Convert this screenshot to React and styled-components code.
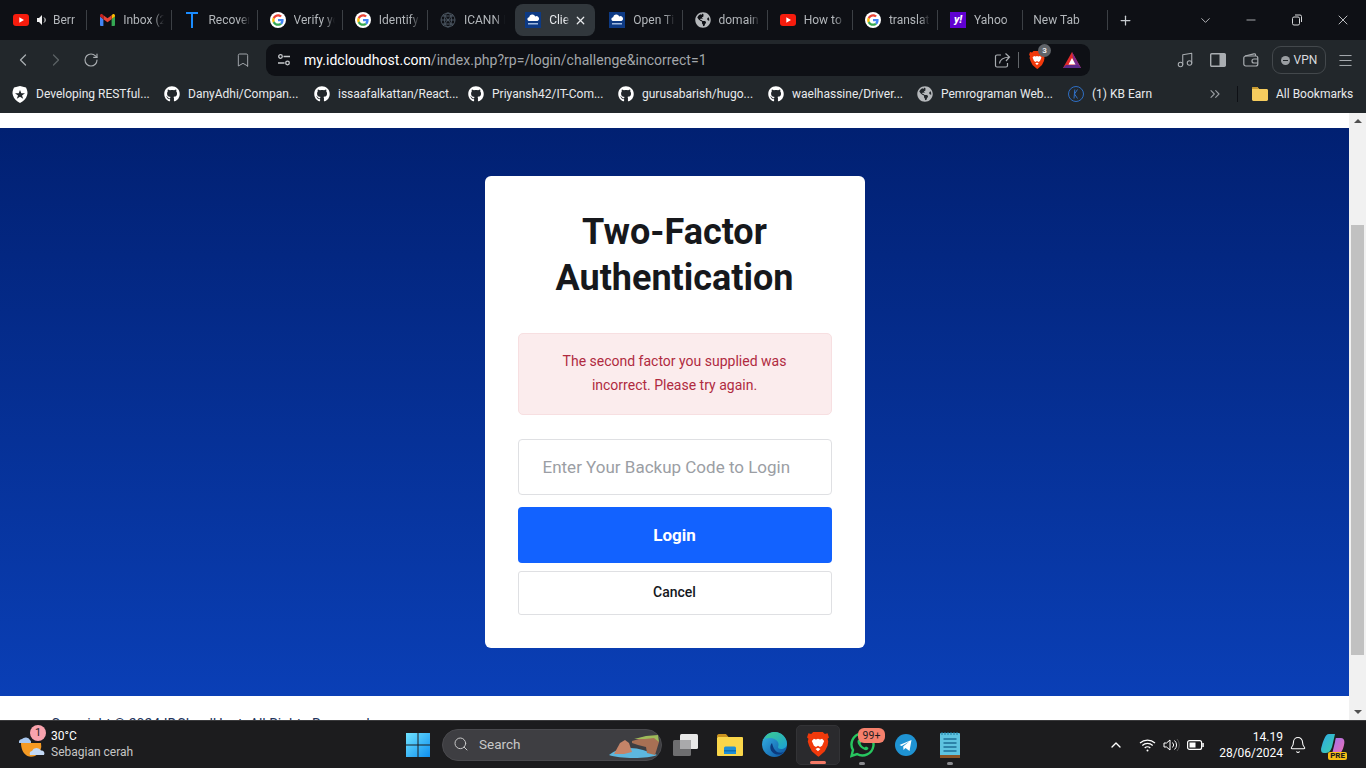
import React from 'react';
import styled, { createGlobalStyle } from 'styled-components';
import { ChevronLeft, ChevronRight, ChevronDown, ChevronUp, ChevronsRight, RotateCw, Bookmark, Music, Menu, Search, Bell, Plus, Minus, X } from 'lucide-react';
import { FaGithub, FaGlobeAmericas } from 'react-icons/fa';

const Global = createGlobalStyle`
  html, body { margin: 0; padding: 0; height: 100%; overflow: hidden; background: #fff; }
  * { box-sizing: border-box; }
  body { font-family: Roboto, "Liberation Sans", sans-serif; }
`;

const Screen = styled.div`
  width: 1366px; height: 768px; display: flex; flex-direction: column; overflow: hidden;
`;

/* ---------- browser chrome ---------- */
const TabStrip = styled.div`
  height: 40px; background: #0e1015; display: flex; align-items: center; padding: 0 0 0 2px; flex: none;
`;
const Tab = styled.div`
  flex: 0 0 85.2px; min-width: 0; height: 32px; position: relative; display: flex; align-items: center;
  padding-left: ${p => (p.$plain ? 10 : 12)}px; border-radius: 8px;
  &:first-child { padding-left: 11px; }
  &::after {
    content: ''; position: absolute; right: 0; top: 6px; height: 20px; width: 1px;
    background: ${p => (p.$noSep ? 'transparent' : '#3c4045')};
  }
`;
const ActiveTab = styled(Tab)`
  background: #31373c; flex: 0 0 80.2px; margin: 0 2px; padding-left: 10px;
`;
const TabIcon = styled.span`
  width: 16px; height: 16px; flex: none; display: flex; align-items: center; justify-content: center; margin-right: 8px;
`;
const TabTitle = styled.span`
  font-size: 12px; color: ${p => (p.$active ? '#e8eaed' : '#b3b7bb')}; white-space: nowrap; overflow: hidden; flex: 1; min-width: 0;
  margin-right: ${p => p.$gap || 8}px;
  -webkit-mask-image: linear-gradient(90deg, #000 75%, transparent 100%);
  mask-image: linear-gradient(90deg, #000 75%, transparent 100%);
`;
const Speaker = styled.span`
  margin: 0 5px 0 0; display: flex; flex: none;
`;
const CloseTab = styled.span`
  color: #e8eaed; display: flex; margin-right: 8px; flex: none;
`;
const NewTabBtn = styled.span`
  color: #c8ccd0; display: flex; margin-left: 10px;
`;
const WinControls = styled.div`
  margin-left: auto; display: flex; align-items: center; color: #d6d8da;
`;
const WinBtn = styled.span`
  width: 46px; display: flex; justify-content: center;
`;
const YahooMark = styled.span`
  width: 16px; height: 16px; background: #5f01d1; color: #fff; font: italic 800 11px/16px Roboto, sans-serif; text-align: center;
`;

const Toolbar = styled.div`
  height: 40px; background: #22272b; display: flex; align-items: center; flex: none;
`;
const NavBtn = styled.span`
  width: ${p => p.$w}px; display: flex; justify-content: ${p => p.$end ? 'flex-end' : 'center'}; padding-right: ${p => p.$end ? 4 : 0}px; color: ${p => p.$dim ? '#5c6165' : '#a9adb1'};
`;
const Omnibox = styled.div`
  width: 824px; height: 32px; background: #0e1015; border-radius: 9px; display: flex; align-items: center; margin-left: 11px; padding: 0 9px 0 10px;
`;
const UrlText = styled.div`
  font-size: 14px; color: #a2a6aa; margin-left: 12px; flex: 1; letter-spacing: 0.03px; white-space: nowrap;
  b { font-weight: 400; color: #fff; }
`;
const OmniDivider = styled.span`
  width: 1px; height: 16px; background: #62666a; margin: 0 10px 0 7px;
`;
const ShieldWrap = styled.span`
  position: relative; display: flex; margin-right: 18px;
`;
const ShieldBadge = styled.span`
  position: absolute; left: 9px; top: -7px; width: 13px; height: 13px; border-radius: 50%; background: #5f6368; color: #e8eaed; font-size: 8px; font-weight: 700; line-height: 13px; text-align: center;
`;
const ToolRight = styled.div`
  margin-left: 78px; display: flex; align-items: center; color: #a9adb1;
`;
const ToolBtn = styled.span`
  width: ${p => p.$w || 33}px; display: flex; justify-content: center;
`;
const VpnPill = styled.span`
  width: 54px; height: 28px; border: 1px solid #43484c; border-radius: 9px; display: flex; align-items: center; justify-content: center; gap: 4px;
  font-size: 12px; font-weight: 400; color: #d8dbde; margin-left: 5px; margin-right: 3px;
`;
const VpnDot = styled.span`
  width: 9px; height: 9px; border-radius: 50%; background: #9a9ea2; position: relative;
  &::after { content: ''; position: absolute; left: 2px; right: 2px; top: 4px; height: 1px; background: #22272b; }
`;

const BookmarkBar = styled.div`
  height: 33px; background: #22272b; display: flex; align-items: center; padding: 0 0 5px 12px; flex: none;
`;
const BookmarkItem = styled.div`
  flex: 0 0 ${p => p.$w}px; display: flex; align-items: center; gap: 8px; font-size: 12px; color: #e8eaed; white-space: nowrap;
  svg { flex: none; }
`;
const BookmarkEnd = styled.div`
  display: flex; align-items: center; margin-left: 51px; color: #9a9ea2;
`;
const BarRule = styled.span`
  width: 1px; height: 16px; background: #0e1015; margin: 0 14px 0 14px;
`;

/* ---------- page ---------- */
const Viewport = styled.div`
  flex: 1; min-height: 0; display: flex; overflow: hidden;
`;
const Page = styled.main`
  flex: 1; min-width: 0; background: #fff; padding-top: 15px; overflow: hidden;
`;
const Hero = styled.section`
  height: 568px; background: linear-gradient(180deg, #012072 0%, #0a3fb6 100%); display: flex; align-items: center; justify-content: center;
`;
const Card = styled.div`
  width: 380px; background: #fff; border-radius: 6px; padding: 33px 33px 33px;
`;
const Title = styled.h1`
  margin: 0 0 32px; font-size: 36px; line-height: 46px; font-weight: 700; color: #16181c; text-align: center;
`;
const Alert = styled.div`
  height: 82px; background: #fbeced; border: 1px solid #f7dfe1; border-radius: 5px; padding: 15px 40px; font-size: 14px; line-height: 24px; color: #b02a3f; text-align: center; margin-bottom: 24px;
`;
const CodeInput = styled.input`
  display: block; width: 100%; height: 56px; border: 1px solid #dfe0e3; border-radius: 4px; padding: 0 24px; font: 400 17px Roboto, sans-serif; outline: none; margin-bottom: 12px;
  &::placeholder { color: #9b9ea4; opacity: 1; }
`;
const LoginButton = styled.button`
  display: block; width: 100%; height: 56px; border: 0; border-radius: 4px; background: #1262ff; color: #fff; font: 700 17px Roboto, sans-serif; margin-bottom: 8px;
`;
const CancelButton = styled.button`
  display: block; width: 100%; height: 44px; border: 1px solid #dfe0e3; border-radius: 3px; background: #fff; color: #14171c; font: 500 14px Roboto, sans-serif; padding: 0 0 2px;
`;
const Footer = styled.footer`
  padding: 18px 0 0 51px; font-size: 14px; line-height: 20px; color: #24345c; white-space: nowrap;
`;
const Scrollbar = styled.div`
  width: 17px; flex: none; background: #f1f1f1; display: flex; flex-direction: column; align-items: center;
`;
const Arrow = styled.span`
  width: 0; height: 0; flex: none; border-left: 4px solid transparent; border-right: 4px solid transparent;
  ${p => p.$down
    ? 'border-top: 4px solid #505050; margin-top: auto; margin-bottom: 6px;'
    : 'border-bottom: 4px solid #505050; margin-top: 6px;'}
`;
const Thumb = styled.div`
  width: 13px; height: 430px; background: #c1c1c1; margin-top: 102px; flex: none;
`;

/* ---------- taskbar ---------- */
const Taskbar = styled.footer`
  height: 48px; flex: none; background: #1c1c1e; border-top: 1px solid #3a3a3c; display: flex; align-items: center;
`;
const Weather = styled.div`
  flex: 0 0 395px; display: flex; align-items: center; padding-left: 18px; height: 100%;
`;
const WeatherIcon = styled.span`
  position: relative; width: 28px; height: 28px; display: flex; margin-right: 5px;
`;
const WeatherBadge = styled.span`
  position: absolute; left: 12px; top: -6px; width: 16px; height: 16px; border-radius: 50%; background: #f9a3ae; color: #1c1c1e; font-size: 11px; line-height: 16px; text-align: center;
`;
const WeatherText = styled.div`
  font-size: 12px; line-height: 15.5px; color: #c6c6c6;
  strong { display: block; font-weight: 400; color: #fff; }
`;
const TaskSlot = styled.span`
  flex: 0 0 ${p => p.$w || 44}px; height: 40px; display: flex; align-items: center; justify-content: center; position: relative; border-radius: 5px;
  ${p => p.$active ? 'background: #2a2a2d; border: 1px solid #333336;' : ''}
`;
const RunDot = styled.span`
  position: absolute; bottom: 0; left: 50%; transform: translateX(-50%);
  width: ${p => p.$on ? 16 : 6}px; height: 3px; border-radius: 2px; background: ${p => p.$on ? '#f47a66' : '#8b8b8f'};
`;
const SearchPill = styled.div`
  width: 220px; height: 32px; margin: 0 2px; border-radius: 16px; background: #3e3e42; border: 1px solid #4a4a4e; display: flex; align-items: center; padding: 0 0 1px 10px; color: #c8c8c8; font-size: 13.5px; gap: 10px; position: relative;
`;
const Thumbnail = styled.span`
  position: absolute; right: 1px; top: 3px; display: flex;
`;
const CountBadge = styled.span`
  position: absolute; left: 18px; top: 3px; width: 27px; height: 15px; border-radius: 6px; background: #f5806c; color: #1c1c1e; font-size: 10.5px; line-height: 15px; text-align: center;
`;
const Tray = styled.div`
  margin-left: auto; display: flex; align-items: center; padding-right: 21px; color: #fff;
`;
const TraySlot = styled.span`
  flex: 0 0 ${p => p.$w || 24}px; display: flex; justify-content: center;
`;
const Clock = styled.div`
  width: 76px; text-align: right; font-size: 12px; line-height: 16px; color: #fff; margin-right: 3px;
`;
const CopilotWrap = styled.span`
  position: relative; display: flex; margin-left: 11px;
`;
const PreTag = styled.span`
  position: absolute; right: -2px; bottom: -3px; background: #f6bd16; color: #1c1c1e; font-size: 8px; font-weight: 800; line-height: 8px; padding: 0 2px; border-radius: 2px;
`;

/* ---------- drawn icons ---------- */
const YouTube = () => (
  <svg width="16" height="12" viewBox="0 0 16 12"><rect width="16" height="12" rx="3" fill="#f61c0d" /><path d="M6.3 3.3 11 6l-4.700 2.700z" fill="#fff" /></svg>
);
const SpeakerIcon = () => (
  <svg width="11" height="10" viewBox="0 0 11 10"><path d="M0 3h2l3-3v10L2 7H0z" fill="#f1f1f1" /><path d="M7 2.500a3.200 3.200 0 0 1 0 5" stroke="#f1f1f1" fill="none" /></svg>
);
const Gmail = () => (
  <svg width="15" height="12" viewBox="0 0 15 12">
    <path d="M0 2.500v8.200c0 .7.500 1.300 1.200 1.300h2.200V5.200z" fill="#4285f4" />
    <path d="M11.600 5.200V12h2.200c.7 0 1.200-.6 1.200-1.300V2.500z" fill="#34a853" />
    <path d="M11.600 1.200v4L15 2.500V1.600c0-1.300-1.500-2-2.500-1.200z" fill="#fbbc04" />
    <path d="M3.400 5.200v-4L7.500 4.300l4.100-3.100v4L7.500 8.300z" fill="#ea4335" />
    <path d="M0 1.600v.9l3.400 2.700v-4L2.500.4C1.500-.4 0 .3 0 1.600z" fill="#c5221f" />
  </svg>
);
const TLogo = () => (
  <svg width="14" height="16" viewBox="0 0 14 16"><path d="M1 1h12M7 1v15" stroke="#1a8cff" strokeWidth="2" fill="none" /></svg>
);
const Google = () => (
  <svg width="16" height="16" viewBox="0 0 48 48">
    <circle cx="24" cy="24" r="24" fill="#fff" />
    <g transform="translate(6.500 6.500) scale(.73)">
      <path fill="#ea4335" d="M24 9.500c3.500 0 6.700 1.200 9.200 3.600l6.900-6.900C35.900 2.400 30.500 0 24 0 14.600 0 6.500 5.400 2.600 13.200l8 6.200C12.400 13.700 17.700 9.500 24 9.500z" />
      <path fill="#4285f4" d="M47 24.500c0-1.600-.1-3.100-.4-4.500H24v9h13c-.6 3-2.300 5.500-4.800 7.200l7.700 6c4.500-4.200 7.100-10.300 7.100-17.700z" />
      <path fill="#fbbc05" d="M10.500 28.600c-.5-1.400-.8-3-.8-4.600s.3-3.200.8-4.600l-8-6.200C1 16.500 0 20.100 0 24s1 7.500 2.600 10.800z" />
      <path fill="#34a853" d="M24 48c6.500 0 11.900-2.100 15.900-5.800l-7.700-6c-2.100 1.400-4.900 2.300-8.200 2.300-6.300 0-11.600-4.200-13.500-9.900l-8 6.200C6.500 42.600 14.600 48 24 48z" />
    </g>
  </svg>
);
const IcannGlobe = () => (
  <svg width="16" height="16" viewBox="0 0 16 16" fill="none" stroke="#4a5560" strokeWidth="1">
    <circle cx="8" cy="8" r="7" /><ellipse cx="8" cy="8" rx="3.500" ry="7" /><path d="M1 8h14M2.500 4h11M2.500 12h11M3 2l10 12M13 2 3 14" />
  </svg>
);
const CloudHost = () => (
  <svg width="16" height="16" viewBox="0 0 16 16">
    <rect width="16" height="16" fill="#0d3a84" />
    <path d="M3.500 9a2 2 0 0 1 .6-3.800 3.300 3.300 0 0 1 6.200-.8A2.400 2.400 0 0 1 12.500 9z" fill="#fff" />
    <rect x="3" y="11" width="10" height="1.500" fill="#9db8df" />
  </svg>
);
const GlobeFav = () => <FaGlobeAmericas size={16} color="#b5b8bb" />;
const RestoreIcon = () => (
  <svg width="12" height="12" viewBox="0 0 12 12" fill="none" stroke="#d6d8da" strokeWidth="1"><rect x="1.500" y="3" width="7" height="8" rx="1.500" /><path d="M4 1h5a1.500 1.500 0 0 1 1.500 1.500V8" /></svg>
);
const SiteTune = () => (
  <svg width="16" height="16" viewBox="0 0 16 16" fill="none" stroke="#c6c9cc" strokeWidth="1.300">
    <circle cx="4.500" cy="4.500" r="1.800" /><path d="M7.500 4.500H14M2 11h6.500" /><circle cx="11.500" cy="11" r="1.800" />
  </svg>
);
const ShareIcon = () => (
  <svg width="17" height="17" viewBox="0 0 17 17" fill="none" stroke="#a9adb1" strokeWidth="1.200">
    <path d="M7 3H3a1.500 1.500 0 0 0-1.500 1.500v9A1.500 1.500 0 0 0 3 15h9a1.500 1.500 0 0 0 1.500-1.500V11" />
    <path d="M5.500 11.500c.5-4 3-6 10-6.500M11.500 1.500l4 3.500-3.500 4" />
  </svg>
);
const BraveLion = ({ size = 16 }) => (
  <svg width={size} height={size * 1.12} viewBox="0 0 16 18">
    <path d="M4.500 0h7L13 1.500 15 1l1 3-1 1 .5 2-.5 3-2 4-4.500 4-1-.5-4-3.500-2-4L.5 7 1 5 0 4l1-3 2 .5z" fill="#f1390b" />
    <path d="M5 5 3.500 6.500 5 10l1.500 1 1.500-1 1.500 1 1.500-1 1.500-3.500L11 5 9.500 5.500 8 5 6.500 5.500zM6.200 12.500 8 14l1.800-1.500L8 11.500z" fill="#fff" />
  </svg>
);
const Triangle = () => (
  <svg width="18" height="16" viewBox="0 0 18 16">
    <path d="M9 0 18 16H0z" fill="#e22a2a" /><path d="M9 0 18 16H12z" fill="#7b2c8d" /><path d="M18 16H0l3-3h12z" fill="#5b2a8a" /><path d="M9 6 12.500 12.500h-7z" fill="#fff" />
  </svg>
);
const PanelIcon = () => (
  <svg width="16" height="14" viewBox="0 0 16 14"><rect x=".7" y=".7" width="14.600" height="12.600" rx="1" fill="none" stroke="#a9adb1" strokeWidth="1.400" /><rect x="9.500" y="1" width="6" height="12" fill="#a9adb1" /></svg>
);
const WalletIcon = () => (
  <svg width="16" height="14" viewBox="0 0 16 14" fill="none" stroke="#a9adb1" strokeWidth="1.200"><path d="M2 3 11 .8c1-.2 1.500.4 1.500 1.200v1" /><rect x=".8" y="3" width="14" height="10" rx="2" /><path d="M15 6h-4a2 2 0 0 0 0 4h4" /></svg>
);
const ShieldStar = () => (
  <svg width="16" height="17" viewBox="0 0 16 17"><path d="M8 0l6 1.500c1.500 3 2 5.500 1 8-.8 3-3.500 5.500-7 7.500-3.500-2-6.200-4.500-7-7.500-1-2.500-.5-5 1-8z" fill="#fff" /><path d="M8 4l1.300 3.300H13L10 9.400l1.200 3.400L8 10.700l-3.200 2.100L6 9.400 3 7.300h3.700z" fill="#22272b" /></svg>
);
const KBadge = () => (
  <svg width="16" height="16" viewBox="0 0 16 16" fill="none" stroke="#2f6fc4" strokeWidth="1"><circle cx="8" cy="8" r="7.500" /><path d="M9.500 3.500 6.500 8l3 4.500M6.800 3.500 6 12.500" /></svg>
);
const Folder = () => (
  <svg width="16" height="14" viewBox="0 0 16 14"><path d="M0 1.500C0 .7.600 0 1.400 0h4l1.600 2h7.600c.8 0 1.400.6 1.400 1.400v9.200c0 .8-.6 1.400-1.400 1.400H1.400C.6 14 0 13.400 0 12.600z" fill="#f6cc5e" /><path d="M0 1.500C0 .7.600 0 1.400 0h4l1.600 2H0z" fill="#c89a30" /></svg>
);
const WeatherArt = () => (
  <svg width="28" height="28" viewBox="0 0 28 28">
    <path d="M3 12h20a10 11 0 0 1-6 13c-3 1-7 1-9-1-3-2-5-7-5-12z" fill="#f59a23" />
    <path d="M1 12a3.500 3.500 0 0 1 3-4 5 5 0 0 1 8 1 3 3 0 0 1 1 3z" fill="#a9c8ef" />
    <path d="M12 24a3 3 0 0 1 2-4 5 5 0 0 1 9-.5 3 3 0 0 1 3 4.500z" fill="#c3d9f5" />
  </svg>
);
const WinLogo = () => (
  <svg width="24" height="24" viewBox="0 0 24 24">
    <defs><linearGradient id="wl" x1="0" y1="0" x2="1" y2="1"><stop offset="0" stopColor="#6fe3ff" /><stop offset="1" stopColor="#0f8ff0" /></linearGradient></defs>
    <path d="M0 0h11.500v11.500H0zM12.500 0H24v11.500H12.500zM0 12.500h11.500V24H0zM12.500 12.500H24V24H12.500z" fill="url(#wl)" />
  </svg>
);
const Landscape = () => (
  <svg width="52" height="26" viewBox="0 0 52 26">
    <path d="M1 22c8-7 22-9 34-5 6 2 12 4 14 5-8 4-38 4-48 0z" fill="#5db7de" />
    <path d="M6 21l6-11 5-3 4 3 3 9-8 2z" fill="#c58468" />
    <path d="M24 8l14-4 11 0 2 5-4 13-8-2-1-6-8-2-6-2z" fill="#a87054" />
    <path d="M26 6l12-3 12-1 1 7-5-4-9 1z" fill="#9fbb5a" />
  </svg>
);
const TaskView = () => (
  <svg width="26" height="24" viewBox="0 0 26 24">
    <rect x="7" y="1" width="18" height="15" rx="1.500" fill="#e8e8e8" />
    <rect x="0" y="7" width="18" height="16" rx="1.500" fill="#6e6e70" />
    <rect x="7" y="7" width="11" height="9" fill="#a9a9ab" />
  </svg>
);
const Explorer = () => (
  <svg width="26" height="22" viewBox="0 0 26 22">
    <path d="M0 2c0-1 .6-2 2-2h7l2.500 3H0z" fill="#c9921f" />
    <rect y="3" width="26" height="19" rx="1" fill="#fad64a" />
    <path d="M7 20v-6a1.500 1.500 0 0 1 1.500-1.500h9A1.500 1.500 0 0 1 19 14v6z" fill="#1f8fd6" />
    <rect x="7" y="16" width="12" height="1.500" fill="#0e6fb0" />
  </svg>
);
const Edge = () => (
  <svg width="25" height="25" viewBox="0 0 25 25">
    <defs>
      <linearGradient id="eg" x1="0" y1="0" x2="1" y2="1"><stop offset="0" stopColor="#3fd08b" /><stop offset="1" stopColor="#1a9fd6" /></linearGradient>
      <linearGradient id="eb" x1="0" y1="0" x2="1" y2="1"><stop offset="0" stopColor="#36b6e8" /><stop offset="1" stopColor="#0b4f9e" /></linearGradient>
    </defs>
    <circle cx="12.500" cy="12.500" r="12.500" fill="url(#eb)" />
    <path d="M2 8C4 2 9 0 13 0c6 0 12 5 12 12 0 3-3 5-6 5-2 0-3-1-3-2 1-2 1-5-2-7-4-3-10-2-14 0z" fill="url(#eg)" />
    <path d="M10 11c-3 3-2 9 3 11 3 1 6 1 9-2-2 1-5 1-7 0-3-2-4-5-5-9z" fill="#0c3a7d" />
  </svg>
);
const WhatsApp = () => (
  <svg width="25" height="26" viewBox="0 0 25 26">
    <path d="M1.500 24 3 18a11 11 0 1 1 4 4z" fill="none" stroke="#27c65f" strokeWidth="2.400" />
    <path d="M8 8c1-1 2-1 2.500 0l1 2-1 1.500c1 2 2 3 4 4l1.500-1 2 1c1 .5 0 2-1 2.500-3 1-9-4-9.500-8 0-1 .2-1.500.5-2z" fill="#27c65f" />
  </svg>
);
const Telegram = () => (
  <svg width="22" height="22" viewBox="0 0 22 22">
    <circle cx="11" cy="11" r="11" fill="#1f93d3" />
    <path d="M4.500 11 16.500 6l-2 11-4-3-2 2-.3-3.500 6-5-7.500 4.500z" fill="#fff" />
  </svg>
);
const Notepad = () => (
  <svg width="20" height="26" viewBox="0 0 20 26">
    <rect y="1" width="20" height="25" rx="1" fill="#5ec3e0" />
    <rect y="23" width="20" height="3" fill="#8a5426" />
    <path d="M3.500 7h13M3.500 11h13M3.500 15h13M3.500 19h13" stroke="#1e6f96" strokeWidth="1.500" />
    <path d="M2 0v3M5 0v3M8 0v3M11 0v3M14 0v3M17 0v3" stroke="#1a7da3" strokeWidth="1" />
  </svg>
);
const WifiIcon = () => (
  <svg width="17" height="14" viewBox="0 0 17 14" fill="none" stroke="#fff" strokeWidth="1.200"><path d="M1 5a11 11 0 0 1 15 0M3.300 7.500a7.500 7.500 0 0 1 10.400 0M5.700 10a4 4 0 0 1 5.600 0" /><circle cx="8.500" cy="12.500" r="1" fill="#fff" stroke="none" /></svg>
);
const VolumeIcon = () => (
  <svg width="17" height="14" viewBox="0 0 17 14" fill="none" stroke="#fff" strokeWidth="1"><path d="M1 5v4h2.500L7 12V2L3.500 5z" /><path d="M9.500 4.500a3.500 3.500 0 0 1 0 5M11.500 2.500a6 6 0 0 1 0 9" /><path d="M14 1a9 9 0 0 1 0 12" stroke="#555" /></svg>
);
const BatteryIcon = () => (
  <svg width="17" height="10" viewBox="0 0 17 10"><rect x=".6" y=".6" width="14" height="8.800" rx="2" fill="none" stroke="#fff" strokeWidth="1.200" /><rect x="2.500" y="2.500" width="6" height="5" fill="#fff" /><rect x="15.300" y="3" width="1.500" height="4" fill="#fff" /></svg>
);
const Copilot = () => (
  <svg width="24" height="24" viewBox="0 0 24 24">
    <defs>
      <linearGradient id="c1" x1="0" y1="0" x2="1" y2="1"><stop offset="0" stopColor="#2fa8e8" /><stop offset="1" stopColor="#3ad0a8" /></linearGradient>
      <linearGradient id="c2" x1="0" y1="0" x2="1" y2="1"><stop offset="0" stopColor="#a070f0" /><stop offset="1" stopColor="#f070b0" /></linearGradient>
    </defs>
    <path d="M8 1h6l-3 13c-1 3-3 6-6 6H3C0 20-.5 17 .5 14 2 9 4 1 8 1z" fill="url(#c1)" />
    <path d="M15 5h5c3 0 4 3 3 7-1 5-3 9-7 9h-5l3-12c.3-2 .7-4 1-4z" fill="url(#c2)" />
  </svg>
);

const tabs = [
  { t: 'Berr', icon: <YouTube />, sound: true },
  { t: 'Inbox (2', icon: <Gmail /> },
  { t: 'Recovery', icon: <TLogo /> },
  { t: 'Verify yo', icon: <Google /> },
  { t: 'Identify', icon: <Google /> },
  { t: 'ICANN L', icon: <IcannGlobe />, noSep: true },
];
const tabsAfter = [
  { t: 'Open Ti', icon: <CloudHost /> },
  { t: 'domain', icon: <GlobeFav /> },
  { t: 'How to', icon: <YouTube /> },
  { t: 'translat', icon: <Google /> },
  { t: 'Yahoo', icon: <YahooMark>y!</YahooMark> },
];

const gh = <FaGithub size={16} color="#fff" />;
const bookmarks = [
  { w: 152, t: 'Developing RESTful...', i: <ShieldStar /> },
  { w: 150, t: 'DanyAdhi/Compan...', i: gh },
  { w: 154, t: 'issaafalkattan/React...', i: gh },
  { w: 150, t: 'Priyansh42/IT-Com...', i: gh },
  { w: 150, t: 'gurusabarish/hugo...', i: gh },
  { w: 149, t: 'waelhassine/Driver...', i: gh },
  { w: 151, t: 'Pemrograman Web...', i: <FaGlobeAmericas size={16} color="#b5b8bb" /> },
  { w: 88, t: '(1) KB Earn', i: <KBadge /> },
];

const renderTab = (tb) => (
  <Tab key={tb.t} $noSep={tb.noSep}>
    <TabIcon>{tb.icon}</TabIcon>
    {tb.sound && <Speaker><SpeakerIcon /></Speaker>}
    <TabTitle>{tb.t}</TabTitle>
  </Tab>
);

export default function App() {
  return (
    <Screen>
      <Global />
      <TabStrip>
        {tabs.map(renderTab)}
        <ActiveTab $noSep>
          <TabIcon><CloudHost /></TabIcon>
          <TabTitle $active $gap={4}>Client</TabTitle>
          <CloseTab><X size={13} strokeWidth={2.2} /></CloseTab>
        </ActiveTab>
        {tabsAfter.map(renderTab)}
        <Tab $plain><TabTitle>New Tab</TabTitle></Tab>
        <NewTabBtn><Plus size={15} strokeWidth={2} /></NewTabBtn>
        <WinControls>
          <WinBtn><ChevronDown size={15} strokeWidth={1.3} /></WinBtn>
          <WinBtn><Minus size={14} strokeWidth={1.3} /></WinBtn>
          <WinBtn><RestoreIcon /></WinBtn>
          <WinBtn><X size={16} strokeWidth={1.3} /></WinBtn>
        </WinControls>
      </TabStrip>

      <Toolbar>
        <NavBtn $w={46}><ChevronLeft size={20} strokeWidth={1.5} /></NavBtn>
        <NavBtn $w={20} $dim><ChevronRight size={20} strokeWidth={1.5} /></NavBtn>
        <NavBtn $w={50}><RotateCw size={16} strokeWidth={1.7} /></NavBtn>
        <NavBtn $w={139} $end><Bookmark size={16} strokeWidth={1.4} /></NavBtn>
        <Omnibox>
          <SiteTune />
          <UrlText><b>my.idcloudhost.com</b>/index.php?rp=/login/challenge&amp;incorrect=1</UrlText>
          <ShareIcon />
          <OmniDivider />
          <ShieldWrap><BraveLion /><ShieldBadge>3</ShieldBadge></ShieldWrap>
          <Triangle />
        </Omnibox>
        <ToolRight>
          <ToolBtn $w={33}><Music size={18} strokeWidth={1.4} /></ToolBtn>
          <ToolBtn $w={34}><PanelIcon /></ToolBtn>
          <ToolBtn $w={32}><WalletIcon /></ToolBtn>
          <VpnPill><VpnDot />VPN</VpnPill>
          <ToolBtn $w={32}><Menu size={17} strokeWidth={1.4} /></ToolBtn>
        </ToolRight>
      </Toolbar>

      <BookmarkBar>
        {bookmarks.map(b => <BookmarkItem key={b.t} $w={b.w}>{b.i}{b.t}</BookmarkItem>)}
        <BookmarkEnd>
          <ChevronsRight size={16} strokeWidth={1.6} />
          <BarRule />
          <BookmarkItem $w={120}><Folder />All Bookmarks</BookmarkItem>
        </BookmarkEnd>
      </BookmarkBar>

      <Viewport>
        <Page>
          <Hero>
            <Card>
              <Title>Two-Factor Authentication</Title>
              <Alert>The second factor you supplied was incorrect. Please try again.</Alert>
              <CodeInput placeholder="Enter Your Backup Code to Login" readOnly />
              <LoginButton>Login</LoginButton>
              <CancelButton>Cancel</CancelButton>
            </Card>
          </Hero>
          <Footer>Copyright © 2024 IDCloudHost. All Rights Reserved.</Footer>
        </Page>
        <Scrollbar>
          <Arrow />
          <Thumb />
          <Arrow $down />
        </Scrollbar>
      </Viewport>

      <Taskbar>
        <Weather>
          <WeatherIcon><WeatherArt /><WeatherBadge>1</WeatherBadge></WeatherIcon>
          <WeatherText><strong>30°C</strong>Sebagian cerah</WeatherText>
        </Weather>
        <TaskSlot $w={45}><WinLogo /></TaskSlot>
        <SearchPill>
          <Search size={16} strokeWidth={1.5} />Search
          <Thumbnail><Landscape /></Thumbnail>
        </SearchPill>
        <TaskSlot><TaskView /></TaskSlot>
        <TaskSlot><Explorer /></TaskSlot>
        <TaskSlot><Edge /></TaskSlot>
        <TaskSlot $active><BraveLion size={22} /><RunDot $on /></TaskSlot>
        <TaskSlot><WhatsApp /><CountBadge>99+</CountBadge><RunDot /></TaskSlot>
        <TaskSlot><Telegram /></TaskSlot>
        <TaskSlot><Notepad /><RunDot /></TaskSlot>
        <Tray>
          <TraySlot><ChevronUp size={16} strokeWidth={2} /></TraySlot>
          <TraySlot $w={7} />
          <TraySlot><WifiIcon /></TraySlot>
          <TraySlot><VolumeIcon /></TraySlot>
          <TraySlot><BatteryIcon /></TraySlot>
          <Clock>14.19<br />28/06/2024</Clock>
          <TraySlot><Bell size={18} strokeWidth={1.4} /></TraySlot>
          <CopilotWrap><Copilot /><PreTag>PRE</PreTag></CopilotWrap>
        </Tray>
      </Taskbar>
    </Screen>
  );
}
